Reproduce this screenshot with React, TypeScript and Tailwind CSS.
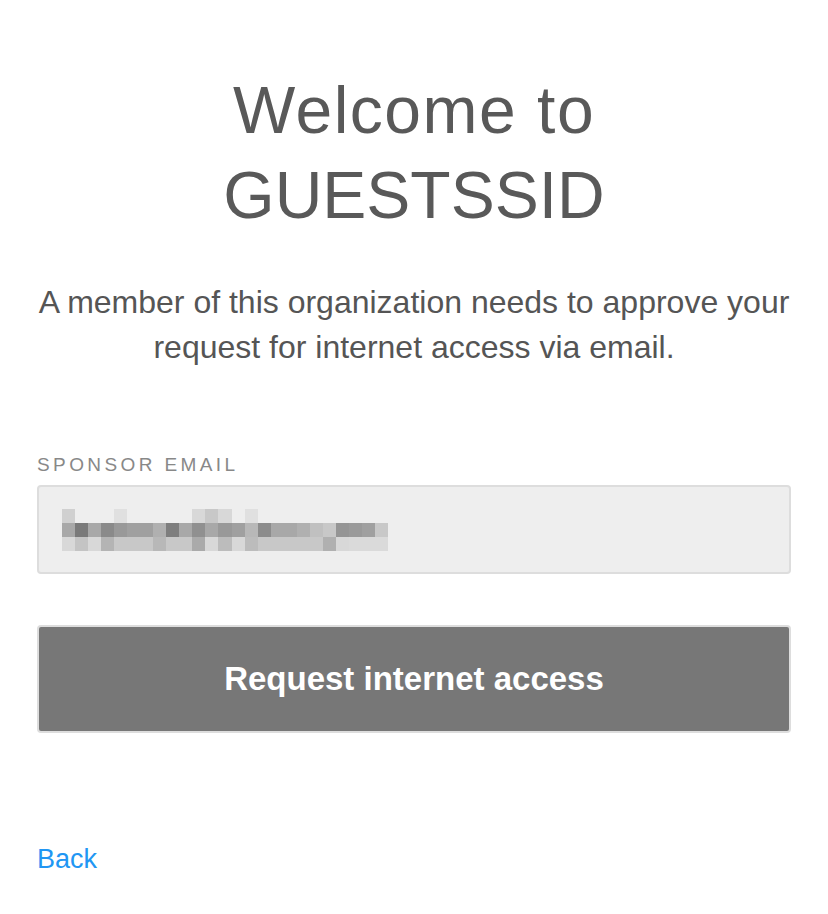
import React from 'react';

// pixelated (redacted) email value, three rows of blocks
const BLUR: (string | null)[][] = [
  ['#d0d0d0', null, null, null, '#e0e0e0', null, null, null, null, null, '#d8d8d8', '#c8c8c8', '#d8d8d8', null, '#e0e0e0', null, null, null, null, null, null, null, null, null, null],
  ['#a8a8a8', '#7a7a7a', '#a8a8a8', '#8a8a8a', '#999999', '#a0a0a0', '#a0a0a0', '#b0b0b0', '#7e7e7e', '#a8a8a8', '#909090', '#a8a8a8', '#999999', '#a0a0a0', '#b8b8b8', '#8c8c8c', '#a8a8a8', '#a8a8a8', '#b0b0b0', '#c0c0c0', '#c8c8c8', '#959595', '#9a9a9a', '#a0a0a0', '#c8c8c8'],
  ['#d8d8d8', '#c4c4c4', '#d8d8d8', '#b4b4b4', '#c8c8c8', '#c8c8c8', '#c8c8c8', '#b8b8b8', '#c8c8c8', '#c8c8c8', '#aaaaaa', '#d8d8d8', '#bcbcbc', '#d8d8d8', '#bcbcbc', '#c8c8c8', '#c8c8c8', '#c8c8c8', '#c8c8c8', '#c8c8c8', '#b0b0b0', '#d8d8d8', '#dadada', '#dadada', '#dadada'],
];

const BlurredEmail: React.FC = () => (
  <svg width="326" height="42" viewBox="0 0 326 42" shapeRendering="crispEdges">
    {BLUR.map((row, r) =>
      row.map((c, i) =>
        c ? <rect key={`${r}-${i}`} x={i * 13.04} y={r * 14} width={13.1} height={14} fill={c} /> : null
      )
    )}
  </svg>
);

export default function App() {
  return (
    <div className="min-h-screen w-full bg-white px-[37px] font-['Liberation_Sans',Arial,sans-serif] text-[#555555]">
      <h1 className="pt-[68px] text-center text-[66px] font-light leading-[85px] text-[#595959]">
        <span className="tracking-[1.5px]">Welcome to</span>
        <br />
        GUESTSSID
      </h1>

      <p className="mt-[42px] text-center text-[32px] leading-[45px]">
        A member of this organization needs to approve your request for internet access via email.
      </p>

      <div className="mt-[83px] text-[19px] uppercase leading-[24px] tracking-[3.4px] text-[#888888]">
        Sponsor email
      </div>

      <div className="mt-[8px] flex h-[89px] items-center rounded-[4px] border-2 border-[#dddddd] bg-[#eeeeee] pl-[23px]">
        <BlurredEmail />
      </div>

      <button className="mt-[51px] flex h-[108px] w-full items-center justify-center rounded-[4px] border-2 border-[#dddddd] bg-[#777777] text-[33px] font-bold text-white">
        Request internet access
      </button>

      <a href="#" className="mt-[111px] inline-block text-[27px] leading-[30px] text-[#2196f3]">
        Back
      </a>
    </div>
  );
}
